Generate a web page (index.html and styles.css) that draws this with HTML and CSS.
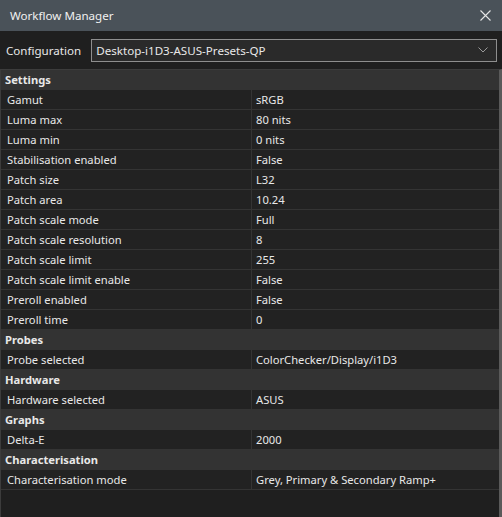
FILE: index.html
```html
<!DOCTYPE html>
<html lang="en">
<head>
    <meta charset="UTF-8">
    <title>Workflow Manager</title>
    <link rel="stylesheet" href="styles.css">
</head>
<body>
    <div class="window">
        <div class="titlebar">
            <span class="title">Workflow Manager</span>
            <svg class="close" width="11" height="11" viewBox="0 0 11 11">
                <path d="M0.5 0.5 L10.5 10.5 M10.5 0.5 L0.5 10.5" stroke="#e6e6e6" stroke-width="1.1" fill="none"/>
            </svg>
        </div>

        <div class="config">
            <label>Configuration</label>
            <div class="combo">
                <span>Desktop-i1D3-ASUS-Presets-QP</span>
                <svg class="arrow" width="10" height="6" viewBox="0 0 10 6">
                    <path d="M0.5 0.5 L5 5 L9.5 0.5" stroke="#9a9a9a" stroke-width="1" fill="none"/>
                </svg>
            </div>
        </div>

        <div class="grid">
            <div class="group">Settings</div>
            <div class="row"><div class="key">Gamut</div><div class="val">sRGB</div></div>
            <div class="row"><div class="key">Luma max</div><div class="val">80 nits</div></div>
            <div class="row"><div class="key">Luma min</div><div class="val">0 nits</div></div>
            <div class="row"><div class="key">Stabilisation enabled</div><div class="val">False</div></div>
            <div class="row"><div class="key">Patch size</div><div class="val">L32</div></div>
            <div class="row"><div class="key">Patch area</div><div class="val">10.24</div></div>
            <div class="row"><div class="key">Patch scale mode</div><div class="val">Full</div></div>
            <div class="row"><div class="key">Patch scale resolution</div><div class="val">8</div></div>
            <div class="row"><div class="key">Patch scale limit</div><div class="val">255</div></div>
            <div class="row"><div class="key">Patch scale limit enable</div><div class="val">False</div></div>
            <div class="row"><div class="key">Preroll enabled</div><div class="val">False</div></div>
            <div class="row"><div class="key">Preroll time</div><div class="val">0</div></div>

            <div class="group">Probes</div>
            <div class="row"><div class="key">Probe selected</div><div class="val">ColorChecker/Display/i1D3</div></div>

            <div class="group">Hardware</div>
            <div class="row"><div class="key">Hardware selected</div><div class="val">ASUS</div></div>

            <div class="group">Graphs</div>
            <div class="row"><div class="key">Delta-E</div><div class="val">2000</div></div>

            <div class="group">Characterisation</div>
            <div class="row"><div class="key">Characterisation mode</div><div class="val">Grey, Primary &amp; Secondary Ramp+</div></div>
        </div>
    </div>
</body>
</html>
```

FILE: styles.css
```css
body {
    margin: 0;
    font-family: 'Noto Sans', 'Open Sans', sans-serif;
    font-size: 11.2px;
    color: #e8e8e8;
    background: #1f1f1f;
    overflow: hidden;
}

.window {
    width: 502px;
    height: 517px;
    display: flex;
    flex-direction: column;
    background: #1f1f1f;
}

.titlebar {
    height: 31px;
    background: #4a5259;
    display: flex;
    align-items: center;
    justify-content: space-between;
    padding: 0 11px 0 10px;
    flex-shrink: 0;
}

.title {
    font-size: 11.6px;
    color: #f0f0f0;
}

.config {
    display: flex;
    align-items: center;
    height: 38px;
    padding: 0 5px 0 6px;
    gap: 10px;
    flex-shrink: 0;
}

.config label {
    font-size: 11.6px;
}

.combo {
    flex: 1;
    height: 21px;
    border: 1px solid #8e8e8e;
    background: #2a2a2a;
    display: flex;
    align-items: center;
    justify-content: space-between;
    padding: 0 8px 0 4px;
    font-size: 11.6px;
}

.grid {
    flex: 1;
    border-top: 1px solid #3c3c3c;
    border-left: 1px solid #3c3c3c;
    border-right: 3px solid #5a5a5a;
}

.group {
    height: 20px;
    line-height: 20px;
    background: #333333;
    font-weight: bold;
    padding-left: 4px;
}

.row {
    display: flex;
    height: 20px;
    line-height: 19px;
    background: #222222;
    border-bottom: 1px solid #343434;
    box-sizing: border-box;
}

.key {
    box-sizing: border-box;
    width: 251px;
    padding-left: 6px;
    border-right: 1px solid #343434;
}

.val {
    flex: 1;
    padding-left: 4px;
}
```
